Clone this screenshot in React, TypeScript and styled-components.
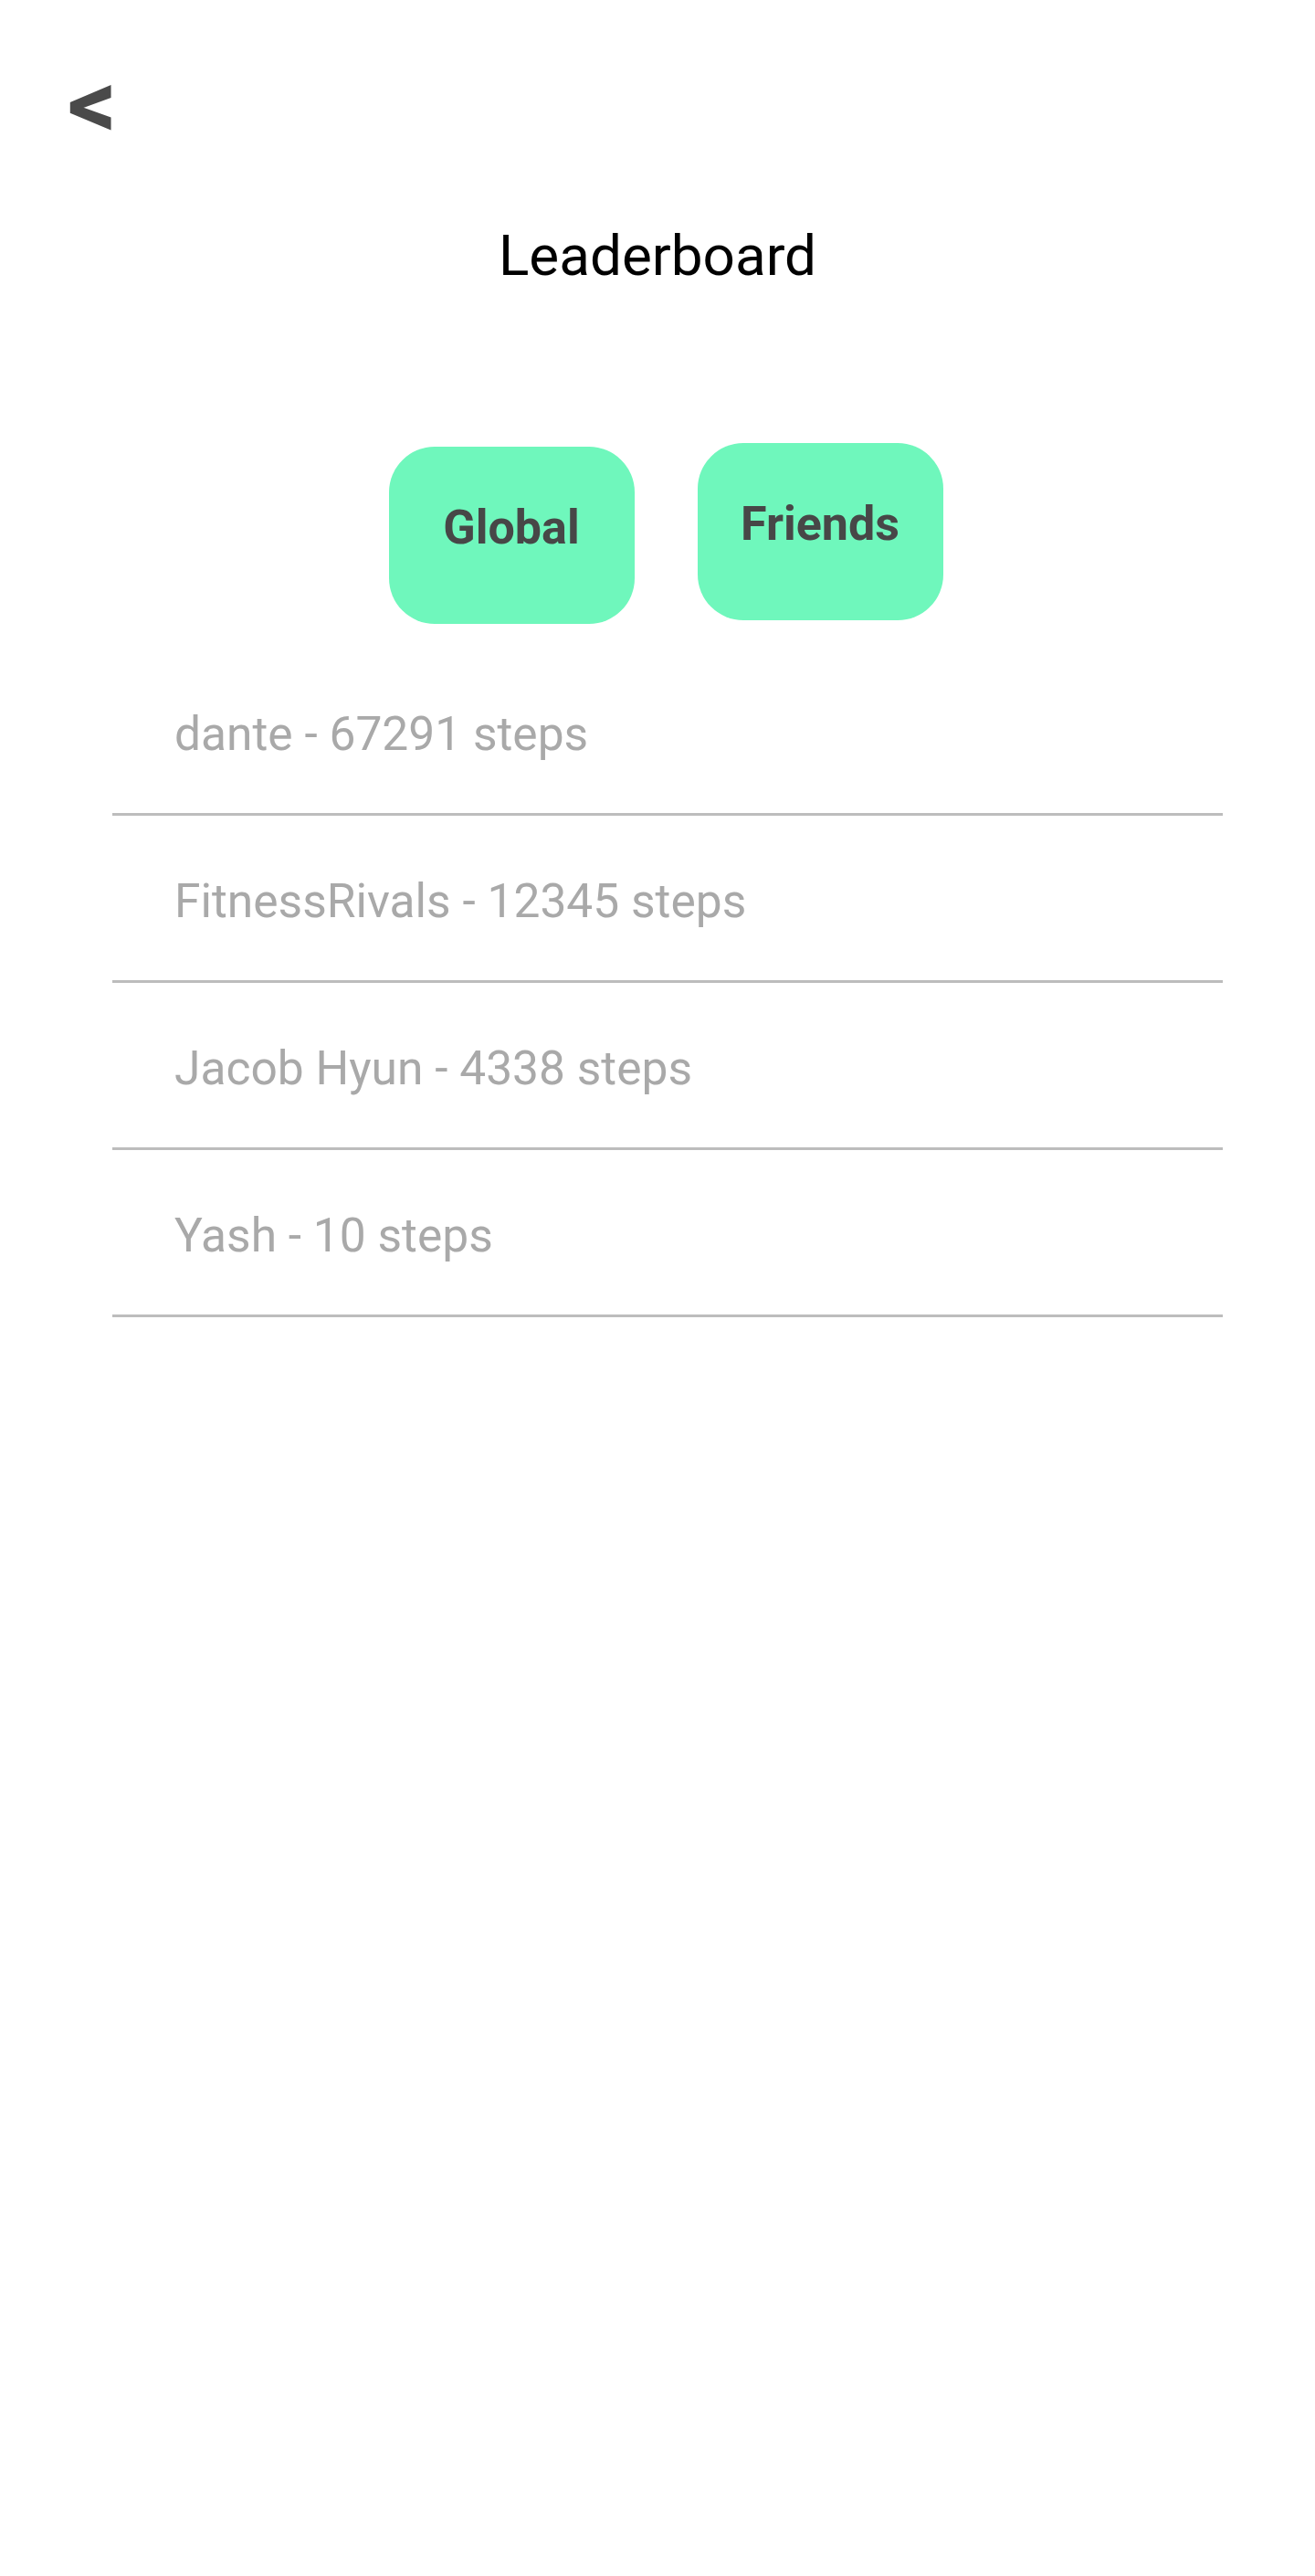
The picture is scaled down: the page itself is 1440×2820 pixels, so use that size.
import styled, { createGlobalStyle } from "styled-components";
import { useState } from "react";

const GlobalStyle = createGlobalStyle`
  html, body {
    margin: 0;
    padding: 0;
    background: #ffffff;
  }
  body {
    font-family: Roboto, "Noto Sans", Arial, sans-serif;
  }
`;

const LEADERS = [
  { name: "dante", steps: 67291 },
  { name: "FitnessRivals", steps: 12345 },
  { name: "Jacob Hyun", steps: 4338 },
  { name: "Yash", steps: 10 },
];

const TABS = ["Global", "Friends"];

const Screen = styled.div`
  width: 1440px;
  min-height: 2820px;
  display: flex;
  flex-direction: column;
  background: #ffffff;
`;

const TopBar = styled.header`
  height: 244px;
  padding-left: 74px;
  display: flex;
  align-items: flex-start;
  box-sizing: border-box;
`;

const BackButton = styled.button`
  margin-top: 61px;
  padding: 0;
  border: 0;
  background: none;
  font-family: Roboto, sans-serif;
  font-weight: 700;
  font-size: 106px;
  line-height: 106px;
  color: #4a4a4a;
  cursor: pointer;
`;

const Title = styled.h1`
  margin: 0;
  font-family: Roboto, sans-serif;
  font-weight: 400;
  font-size: 62px;
  line-height: 72px;
  color: #000000;
  text-align: center;
`;

const Tabs = styled.div`
  margin-top: 169px;
  display: flex;
  justify-content: center;
  align-items: flex-start;
  gap: 69px;
  padding-left: 18px;
`;

const TabButton = styled.button<{ $offset: number }>`
  margin-top: ${({ $offset }) => $offset}px;
  width: 269px;
  height: 194px;
  padding: 0 0 16px;
  box-sizing: border-box;
  border: 0;
  border-radius: 50px;
  background: #6ff7bc;
  display: flex;
  align-items: center;
  justify-content: center;
  font-family: Roboto, sans-serif;
  font-weight: 700;
  font-size: 52px;
  line-height: 52px;
  color: #474747;
  cursor: pointer;
`;

const List = styled.ul`
  margin: 27px 101px 0 123px;
  padding: 0;
  list-style: none;
`;

const Row = styled.li`
  height: 183px;
  padding: 6px 0 0 68px;
  box-sizing: border-box;
  border-bottom: 3px solid #bdbdbd;
  display: flex;
  align-items: center;
  font-family: Roboto, sans-serif;
  font-size: 51.5px;
  color: #a9a9a9;
`;

export default function App() {
  const [tab, setTab] = useState(0);

  return (
    <Screen>
      <GlobalStyle />
      <TopBar>
        <BackButton aria-label="Back">&lt;</BackButton>
      </TopBar>
      <Title>Leaderboard</Title>
      <Tabs>
        {TABS.map((label, i) => (
          <TabButton
            key={label}
            $offset={i === 0 ? 4 : 0}
            onClick={() => setTab(i)}
            aria-pressed={i === tab}
          >
            {label}
          </TabButton>
        ))}
      </Tabs>
      <List>
        {LEADERS.map(({ name, steps }) => (
          <Row key={name}>
            {name} - {steps} steps
          </Row>
        ))}
      </List>
    </Screen>
  );
}
